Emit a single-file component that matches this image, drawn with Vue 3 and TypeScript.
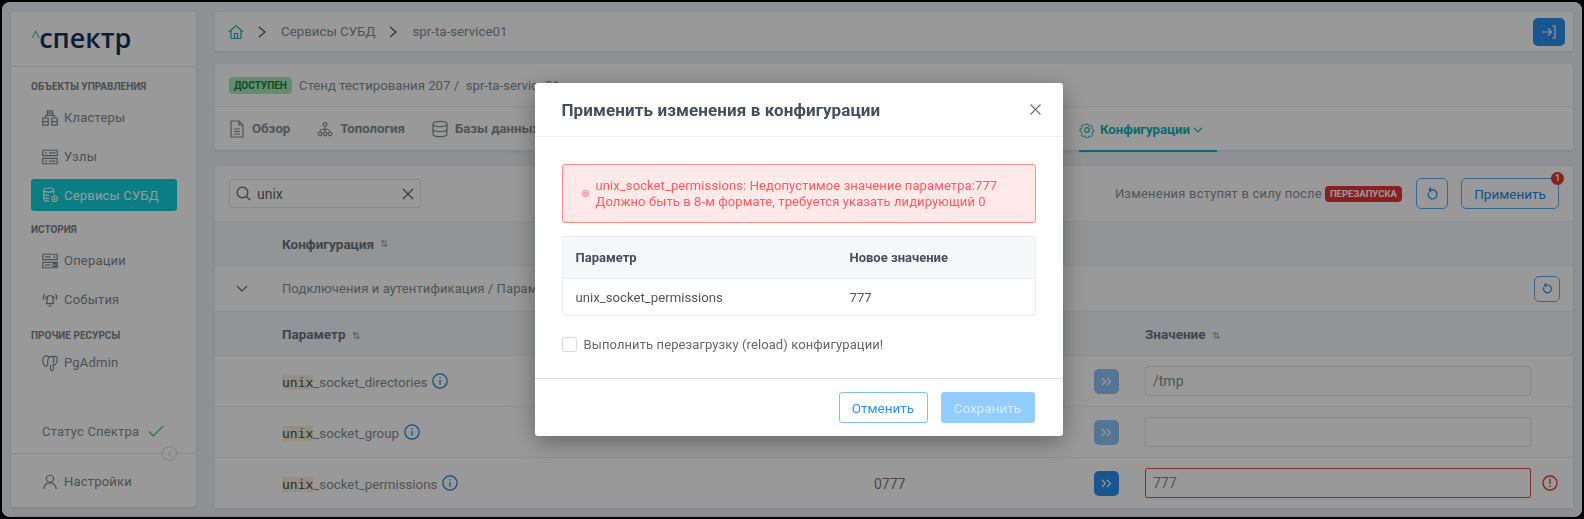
<template>
  <div class="screen">
    <aside class="sidebar">
      <div class="logo"><span class="caret">^</span>спектр</div>
      <nav class="nav">
        <template v-for="group in navGroups" :key="group.title">
          <h4 class="nav-title">{{ group.title }}</h4>
          <a v-for="item in group.items" :key="item.label" class="nav-item" :class="{ active: item.active }">
            <svg class="nav-icon" viewBox="0 0 20 20" fill="none" stroke="currentColor" stroke-width="1.3">
              <path :d="item.icon" />
            </svg>
            {{ item.label }}
          </a>
        </template>
      </nav>
      <div class="status">
        Статус Спектра
        <svg width="16" height="13" viewBox="0 0 18 14" fill="none" stroke="#3fc06a" stroke-width="1.4"><path d="M1 7l5 5L17 1" /></svg>
      </div>
      <div class="settings">
        <span class="collapse">
          <svg width="8" height="8" viewBox="0 0 8 8" fill="none" stroke="#c4c8cc" stroke-width="1"><path d="M5.5 1L2.5 4l3 3" /></svg>
        </span>
        <a class="nav-item">
          <svg class="nav-icon" viewBox="0 0 20 20" fill="none" stroke="currentColor" stroke-width="1.3">
            <circle cx="10" cy="6.5" r="4" /><path d="M3 18c.6-4.5 3.4-7 7-7s6.400 2.500 7 7" />
          </svg>
          Настройки
        </a>
      </div>
    </aside>

    <main class="main">
      <header class="card topbar">
        <svg class="home" width="16" height="16" viewBox="0 0 16 16" fill="none" stroke="#1fb6bd" stroke-width="1.200">
          <path d="M1 8l7-6.500L15 8M3 6.500V14.500h10V6.500M6.500 14.500V9.500h3v5" />
        </svg>
        <svg class="crumb-sep" width="8" height="12" viewBox="0 0 8 12" fill="none" stroke="#555" stroke-width="1.300"><path d="M1 1l6 5-6 5" /></svg>
        <span>Сервисы СУБД</span>
        <svg class="crumb-sep" width="8" height="12" viewBox="0 0 8 12" fill="none" stroke="#555" stroke-width="1.300"><path d="M1 1l6 5-6 5" /></svg>
        <span>spr-ta-service01</span>
        <button class="exit-btn">
          <svg width="16" height="14" viewBox="0 0 16 14" fill="none" stroke="#fff" stroke-width="1.200"><path d="M1 7h9M7 3.500L10.500 7 7 10.500M11 1h3v12h-3" /></svg>
        </button>
      </header>

      <section class="card info">
        <div class="info-line">
          <span class="state">ДОСТУПЕН</span>
          <span>Стенд тестирования 207 /&nbsp; spr-ta-service01</span>
        </div>
        <div class="tabs">
          <a v-for="tab in tabs" :key="tab.label" class="tab">
            <svg width="16" height="18" viewBox="0 0 16 18" fill="none" stroke="currentColor" stroke-width="1.200"><path :d="tab.icon" /></svg>
            {{ tab.label }}
          </a>
          <a class="tab tab-active">
            <svg width="16" height="16" viewBox="0 0 16 16" fill="none" stroke="currentColor" stroke-width="1.200">
              <circle cx="8" cy="8" r="2.300" />
              <path d="M6.700 1h2.600l.4 2 1.500.7 1.800-1 1.800 1.900-1 1.700.6 1.500 1.900.5v2.400l-1.900.5-.6 1.500 1 1.700-1.800 1.900-1.800-1-1.500.6-.4 2.100H6.700l-.4-2-1.500-.7-1.800 1-1.800-1.900 1-1.700-.6-1.500L-.3 9.400V7l1.900-.5.600-1.500-1-1.700 1.800-1.900 1.800 1 1.500-.7z" transform="translate(1.300 1.200) scale(.83)" />
            </svg>
            Конфигурации
            <svg class="tab-caret" width="10" height="6" viewBox="0 0 10 6" fill="none" stroke="currentColor" stroke-width="1.200"><path d="M1 1l4 4 4-4" /></svg>
          </a>
        </div>
      </section>

      <section class="card content">
        <div class="toolbar">
          <div class="search">
            <svg width="15" height="15" viewBox="0 0 15 15" fill="none" stroke="#666" stroke-width="1.200"><circle cx="6.500" cy="6.500" r="5.300" /><path d="M10.500 10.500L14 14" /></svg>
            <span class="search-text">unix</span>
            <svg width="12" height="12" viewBox="0 0 12 12" fill="none" stroke="#666" stroke-width="1.300"><path d="M1 1l10 10M11 1L1 11" /></svg>
          </div>
          <div class="toolbar-right">
            <span class="note">Изменения вступят в силу после</span>
            <span class="restart">ПЕРЕЗАПУСКА</span>
            <button class="outline-btn square">
              <svg width="14" height="14" viewBox="0 0 14 14" fill="none" stroke="#1d88e5" stroke-width="1.200"><path d="M3.500 5.500A4.500 4.500 0 1 0 7 3H4.500M6 1L4.200 3 6 5" /></svg>
            </button>
            <button class="outline-btn apply">
              Применить
              <span class="dot">1</span>
            </button>
          </div>
        </div>

        <div class="head-row conf-head">
          <b>Конфигурация</b><span class="sort">⇅</span>
        </div>

        <div class="group-row">
          <svg class="chevron" width="12" height="7" viewBox="0 0 12 7" fill="none" stroke="#666" stroke-width="1.200"><path d="M1 1l5 5 5-5" /></svg>
          <span>Подключения и аутентификация / Параметры подключений</span>
          <button class="outline-btn small">
            <svg width="13" height="13" viewBox="0 0 14 14" fill="none" stroke="#1d88e5" stroke-width="1.300"><path d="M3.500 5.500A4.500 4.500 0 1 0 7 3H4.500M6 1L4.200 3 6 5" /></svg>
          </button>
        </div>

        <div class="param-grid head-row">
          <span><b>Параметр</b><span class="sort">⇅</span></span>
          <span></span>
          <span></span>
          <span><b>Значение</b><span class="sort">⇅</span></span>
        </div>

        <div v-for="row in rows" :key="row.name" class="param-grid row">
          <span class="param-name">
            <mark>unix</mark>{{ row.name }}
            <svg class="info-icon" width="16" height="16" viewBox="0 0 15 15" fill="none" stroke="#1d88e5" stroke-width="1.200">
              <circle cx="7.500" cy="7.500" r="6.700" /><path d="M7.500 6.500v4.500M7.500 3.800v1.300" />
            </svg>
          </span>
          <span class="current">{{ row.current }}</span>
          <button class="push" :class="{ enabled: row.error }">
            <svg width="11" height="9" viewBox="0 0 11 9" fill="none" stroke="#fff" stroke-width="1.100"><path d="M1 1l3.500 3.500L1 8M6 1l3.500 3.500L6 8" /></svg>
          </button>
          <span class="value-cell">
            <span class="value-input" :class="{ invalid: row.error }">{{ row.value }}</span>
            <svg v-if="row.error" class="warn" width="16" height="16" viewBox="0 0 16 16" fill="none" stroke="#e53535" stroke-width="1.300">
              <circle cx="8" cy="8" r="7" /><path d="M8 3.500v5.500M8 10.500v1.500" />
            </svg>
          </span>
        </div>
      </section>
    </main>

    <div class="overlay">
      <div class="modal">
        <div class="modal-head">
          <h3>Применить изменения в конфигурации</h3>
          <svg width="11" height="11" viewBox="0 0 11 11" fill="none" stroke="#6b7278" stroke-width="1.200"><path d="M.5.5l10 10M10.500.5l-10 10" /></svg>
        </div>
        <div class="modal-body">
          <div class="alert">
            <svg width="7" height="7" viewBox="0 0 7 7" fill="none" stroke="#ff5a5f" stroke-width=".8"><circle cx="3.500" cy="3.500" r="3" /><path d="M2.200 2.200l2.600 2.600M4.800 2.200L2.200 4.800" /></svg>
            <p>unix_socket_permissions: Недопустимое значение параметра:777<br />Должно быть в 8-м формате, требуется указать лидирующий 0</p>
          </div>
          <div class="changes">
            <div class="changes-row changes-head"><span>Параметр</span><span>Новое значение</span></div>
            <div class="changes-row"><span>unix_socket_permissions</span><span>777</span></div>
          </div>
          <label class="reload"><i class="box"></i>Выполнить перезагрузку (reload) конфигурации!</label>
        </div>
        <div class="modal-foot">
          <button class="cancel">Отменить</button>
          <button class="save">Сохранить</button>
        </div>
      </div>
    </div>
  </div>
</template>

<script setup lang="ts">
const navGroups = [
  {
    title: 'Объекты управления',
    items: [
      { label: 'Кластеры', icon: 'M7 2h6v5H7zM7 4.500h6M2 10h6v4H2zM2 14h6v4H2zM12 10h6v4h-6zM12 14h6v4h-6zM5 7v3M15 7v3M5 7h10' },
      { label: 'Узлы', icon: 'M2 2.500h16v6H2zM2 11.500h16v6H2zM4.500 5.500h2M4.500 14.500h2M9 5.500h7M9 14.500h7' }
    ]
  },
  {
    title: '',
    items: [
      { label: 'Сервисы СУБД', icon: 'M3 4.500c0-3 11-3 11 0s-11 3-11 0zM3 4.500v10c0 1.500 3 2.500 6 2.500M14 4.500V9M3 8c0 1.500 3 2.500 6 2.500M3 11.500c0 1.500 3 2.500 6 2.500M15 11a3.200 3.200 0 1 0 .01 0zM15 13.500a.7.7 0 1 0 .01 0z', active: true }
    ]
  },
  {
    title: 'История',
    items: [
      { label: 'Операции', icon: 'M2 2.500h16v6H2zM2 11.500h16v6H2zM4.500 5.500h6M4.500 14.500h6M15 4v3M13.500 13h3v3h-3z' },
      { label: 'События', icon: 'M6 14c1-2 1-3 1-6a3 3 0 0 1 6 0c0 3 0 4 1 6zM8.500 16.500h3M3.500 10C2 7.500 2.500 5 4 3.500M16.500 10c1.500-2.500 1-5-.5-6.500M5.500 8.500c-.5-1-.3-2 .3-3M14.500 8.500c.5-1 .3-2-.3-3' }
    ]
  },
  {
    title: 'Прочие ресурсы',
    items: [
      { label: 'PgAdmin', icon: 'M4 13C1.500 10 1 5 3.500 3c2-1.500 4-.5 5 .5 2-1 4-1 5 0 1-1 3-1.500 4 0s.5 6-1.500 8c-1 1-2 .5-2.500 0V17c0 2-3 2-3 0v-5M8.500 3.500C7 7 7 10 7.500 12 6 14 5 14 4 13M13.500 3.500c1 2 1 4 .500 6.500' }
    ]
  }
]

const tabs = [
  { label: 'Обзор', icon: 'M2 1h8l4 4v12H2zM10 1v4h4M5 9h6M5 11.500h6M5 14h6' },
  { label: 'Топология', icon: 'M8 2.500a1.800 1.800 0 1 0 .01 0zM3 12a1.800 1.800 0 1 0 .01 0zM8 12a1.800 1.800 0 1 0 .01 0zM13 12a1.800 1.800 0 1 0 .01 0zM8 6v6M3 12c0-2 1-3 5-3s5 1 5 3' },
  { label: 'Базы данных', icon: 'M1 4c0-3.500 14-3.500 14 0s-14 3.500-14 0zM1 4v10c0 3.500 14 3.500 14 0V4M1 9c0 3.500 14 3.500 14 0' }
]

const rows = [
  { name: '_socket_directories', current: '', value: '/tmp', error: false },
  { name: '_socket_group', current: '', value: '', error: false },
  { name: '_socket_permissions', current: '0777', value: '777', error: true }
]
</script>

<style>
html, body { margin: 0; background: #000; }
</style>

<style scoped>
* { box-sizing: border-box; }
.screen {
  position: relative;
  width: 1580px;
  height: 515px;
  margin: 2px;
  padding: 10px 9px 0 9px;
  display: flex;
  gap: 19px;
  overflow: hidden;
  border-radius: 8px;
  background: #eef1f5;
  font-family: Roboto, "Liberation Sans", sans-serif;
  font-size: 13px;
  color: #858c92;
  filter: blur(.4px);
}
.card {
  background: #fff;
  border-radius: 3px;
  box-shadow: 0 1px 3px rgba(40, 60, 80, .12);
}

/* sidebar */
.sidebar {
  width: 185px;
  height: 495px;
  flex: none;
  display: flex;
  flex-direction: column;
  background: #fff;
  border-radius: 3px;
  box-shadow: 0 1px 3px rgba(40, 60, 80, .15);
}
.logo {
  height: 55px;
  padding: 4px 0 0 20px;
  border-bottom: 1px solid #e8ebee;
  font-family: "Open Sans", sans-serif;
  font-size: 27px;
  font-weight: 600;
  line-height: 40px;
  color: #133558;
}
.caret { color: #18c5c9; font-size: 16px; vertical-align: 6px; font-weight: 400; margin-right: -1px; }
.nav { padding: 2px 20px 0; }
.nav-title {
  margin: 0;
  padding-top: 12px;
  height: 29px;
  font-size: 10px;
  line-height: 12px;
  font-weight: 700;
  text-transform: uppercase;
  color: #7d8388;
}
.nav-title:empty { display: none; }
.nav-title:last-of-type { padding-top: 11px; height: 24px; }
.nav-item {
  height: 39px;
  display: flex;
  align-items: center;
  gap: 5px;
  padding-left: 10px;
  font-size: 13px;
  color: #7f878e;
  letter-spacing: .2px;
}
.nav-item.active {
  height: 32px;
  margin: 3px 0 1px;
  width: 146px;
  border-radius: 3px;
  background: #13d3dc;
  color: #fff;
}
.nav-icon { width: 18px; height: 18px; flex: none; }
.status {
  margin-top: auto;
  height: 44px;
  padding-left: 31px;
  display: flex;
  align-items: center;
  gap: 9px;
  color: #858c92;
  letter-spacing: .2px;
}
.settings {
  position: relative;
  padding: 8px 20px 6px;
  border-top: 1px solid #e8ebee;
}
.collapse {
  position: absolute;
  right: 19px;
  top: -8px;
  width: 15px;
  height: 15px;
  display: flex;
  align-items: center;
  justify-content: center;
  border: 1px solid #d8dbde;
  border-radius: 50%;
  background: #fff;
}

/* main */
.main {
  flex: 1;
  display: flex;
  flex-direction: column;
  gap: 13px;
  min-width: 0;
}
.topbar {
  height: 39px;
  flex: none;
  display: flex;
  align-items: center;
  padding: 0 8px 0 13px;
  font-size: 13.300px;
}
.crumb-sep { margin: 0 15px 0 14px; }
.exit-btn {
  margin-left: auto;
  width: 32px;
  height: 28px;
  border: 0;
  border-radius: 5px;
  background: #2a8ff0;
  display: flex;
  align-items: center;
  justify-content: center;
}
.info { height: 86px; flex: none; }
.info-line {
  height: 43px;
  display: flex;
  align-items: center;
  gap: 7px;
  padding-left: 14px;
  border-bottom: 1px solid #edf0f2;
  font-size: 13.200px;
}
.state {
  padding: 0 5px;
  height: 17px;
  border-radius: 4px;
  background: #a6e9bd;
  color: #1b7a3e;
  font-size: 10px;
  font-weight: 700;
  line-height: 17px;
}
.tabs { height: 43px; display: flex; align-items: center; padding-left: 14px; }
.tab {
  display: flex;
  align-items: center;
  gap: 7px;
  margin-right: 27px;
  font-weight: 700;
  font-size: 13.200px;
}
.tab-active {
  position: absolute;
  left: 1077px;
  top: 107px;
  height: 43px;
  width: 138px;
  margin: 0;
  gap: 5px;
  color: #0fb3ba;
  border-bottom: 2px solid #0fb3ba;
}
.tab-caret { margin-left: -2px; }
.content { flex: 1; margin-top: 3px; margin-bottom: 9px; overflow: hidden; border-radius: 3px 3px 0 0; }
.toolbar {
  height: 56px;
  display: flex;
  align-items: center;
  justify-content: space-between;
  padding: 0 14px;
  border-bottom: 1px solid #edf0f2;
}
.search {
  width: 192px;
  height: 29px;
  display: flex;
  align-items: center;
  gap: 6px;
  padding: 0 6px;
  border: 1px solid #e4e7ea;
  border-radius: 2px;
  color: #5f666c;
  font-size: 14px;
}
.search-text { flex: 1; }
.toolbar-right { display: flex; align-items: center; }
.note { color: #8a8f94; letter-spacing: .2px; }
.restart {
  margin: 0 14px 0 3px;
  padding: 0 5px;
  height: 16px;
  border-radius: 4px;
  background: #e53535;
  color: #fff;
  font-size: 9.500px;
  font-weight: 700;
  line-height: 16px;
}
.outline-btn {
  position: relative;
  border: 1px solid #5dabf0;
  border-radius: 5px;
  background: #fff;
  color: #1d88e5;
  font-family: inherit;
  font-size: 13.500px;
  display: flex;
  align-items: center;
  justify-content: center;
}
.square { width: 32px; height: 31px; margin-right: 13px; }
.apply { width: 98px; height: 31px; }
.dot {
  position: absolute;
  right: -6px;
  top: -7px;
  width: 13px;
  height: 13px;
  border-radius: 50%;
  background: #e53535;
  color: #fff;
  font-size: 9px;
  font-weight: 700;
  line-height: 13px;
  text-align: center;
}
.head-row {
  height: 43px;
  align-items: center;
  background: #f6f7f9;
  color: #6a7580;
  font-size: 13.500px;
}
.conf-head { display: flex; padding-left: 67px; }
.sort { margin-left: 6px; font-size: 10px; color: #9aa0a6; }
.group-row {
  position: relative;
  height: 47px;
  display: flex;
  align-items: center;
  padding-left: 67px;
  border-top: 1px solid #e9ecef;
  border-bottom: 1px solid #e9ecef;
  color: #858c92;
  letter-spacing: .1px;
}
.chevron { position: absolute; left: 21px; top: 19px; }
.small { margin-left: auto; margin-right: 13px; width: 26px; height: 26px; }
.param-grid {
  display: grid;
  grid-template-columns: 592px 220px 51px 1fr;
  align-items: center;
  padding-left: 67px;
}
.row { height: 51px; border-top: 1px solid #e9ecef; }
.param-name { display: flex; align-items: center; color: #858c92; margin-top: 2px; font-size: 13.300px; }
mark {
  background: #fbeed8;
  color: #4a4a4a;
  font-family: "DejaVu Sans Mono", monospace;
  font-size: 13px;
}
.info-icon { margin-left: 5px; margin-top: -3px; }
.current { color: #777; font-size: 14px; margin-top: 2px; }
.push {
  width: 25px;
  height: 25px;
  border: 0;
  border-radius: 5px;
  background: #8cc3f5;
  display: flex;
  align-items: center;
  justify-content: center;
}
.push.enabled { background: #2a8ff0; }
.value-cell { display: flex; align-items: center; gap: 11px; }
.value-input {
  width: 386px;
  height: 30px;
  padding: 0 7px;
  border: 1px solid #e2e5e8;
  border-radius: 2px;
  color: #858c92;
  font-size: 14px;
  line-height: 28px;
}
.value-input.invalid { border-color: #e04848; }

/* modal */
.overlay {
  position: absolute;
  inset: -2px;
  display: flex;
  align-items: center;
  justify-content: center;
  padding-left: 13px;
  background: rgba(0, 0, 0, .4);
}
.modal {
  width: 528px;
  height: 353px;
  display: flex;
  flex-direction: column;
  background: #fff;
  border-radius: 3px;
  box-shadow: 0 6px 24px rgba(0, 0, 0, .35);
}
.modal-head {
  height: 54px;
  flex: none;
  display: flex;
  align-items: center;
  justify-content: space-between;
  padding: 0 22px 0 27px;
  border-bottom: 1px solid #eef0f3;
}
.modal-head h3 { margin: 0; font-size: 17px; letter-spacing: .1px; font-weight: 700; color: #454f5b; }
.modal-body { flex: 1; padding: 27px 27px 0; }
.alert {
  height: 59px;
  display: flex;
  align-items: center;
  gap: 7px;
  padding-left: 19px;
  border: 1px solid #ff8b8b;
  border-radius: 3px;
  background: #ffe9e9;
  color: #ff5a5f;
}
.alert p { margin: 0; line-height: 16px; letter-spacing: .1px; }
.changes {
  margin-top: 13px;
  border: 1px solid #e8ebef;
  border-radius: 3px;
}
.changes-row {
  height: 36px;
  display: grid;
  grid-template-columns: 274px 1fr;
  align-items: center;
  padding-left: 13px;
  color: #555;
  font-size: 13.200px;
}
.changes-head {
  height: 42px;
  background: #f6f7f9;
  border-bottom: 1px solid #e8ebef;
  font-size: 13px;
  font-weight: 700;
  color: #454f5b;
}
.reload {
  display: flex;
  align-items: center;
  gap: 7px;
  margin-top: 21px;
  color: #666;
  letter-spacing: .1px;
}
.box {
  width: 15px;
  height: 15px;
  border: 1px solid #d4d9de;
  border-radius: 3px;
}
.modal-foot {
  height: 58px;
  flex: none;
  display: flex;
  justify-content: flex-end;
  align-items: center;
  gap: 13px;
  padding-right: 28px;
  border-top: 1px solid #dfe3e8;
}
.modal-foot button {
  height: 31px;
  border-radius: 3px;
  font-family: inherit;
  font-size: 13.500px;
}
.cancel { width: 89px; background: #fff; border: 1px solid #7cc0ff; color: #2a95f5; }
.save { width: 94px; background: #93ccff; border: 0; color: #d6ecff; }
</style>
